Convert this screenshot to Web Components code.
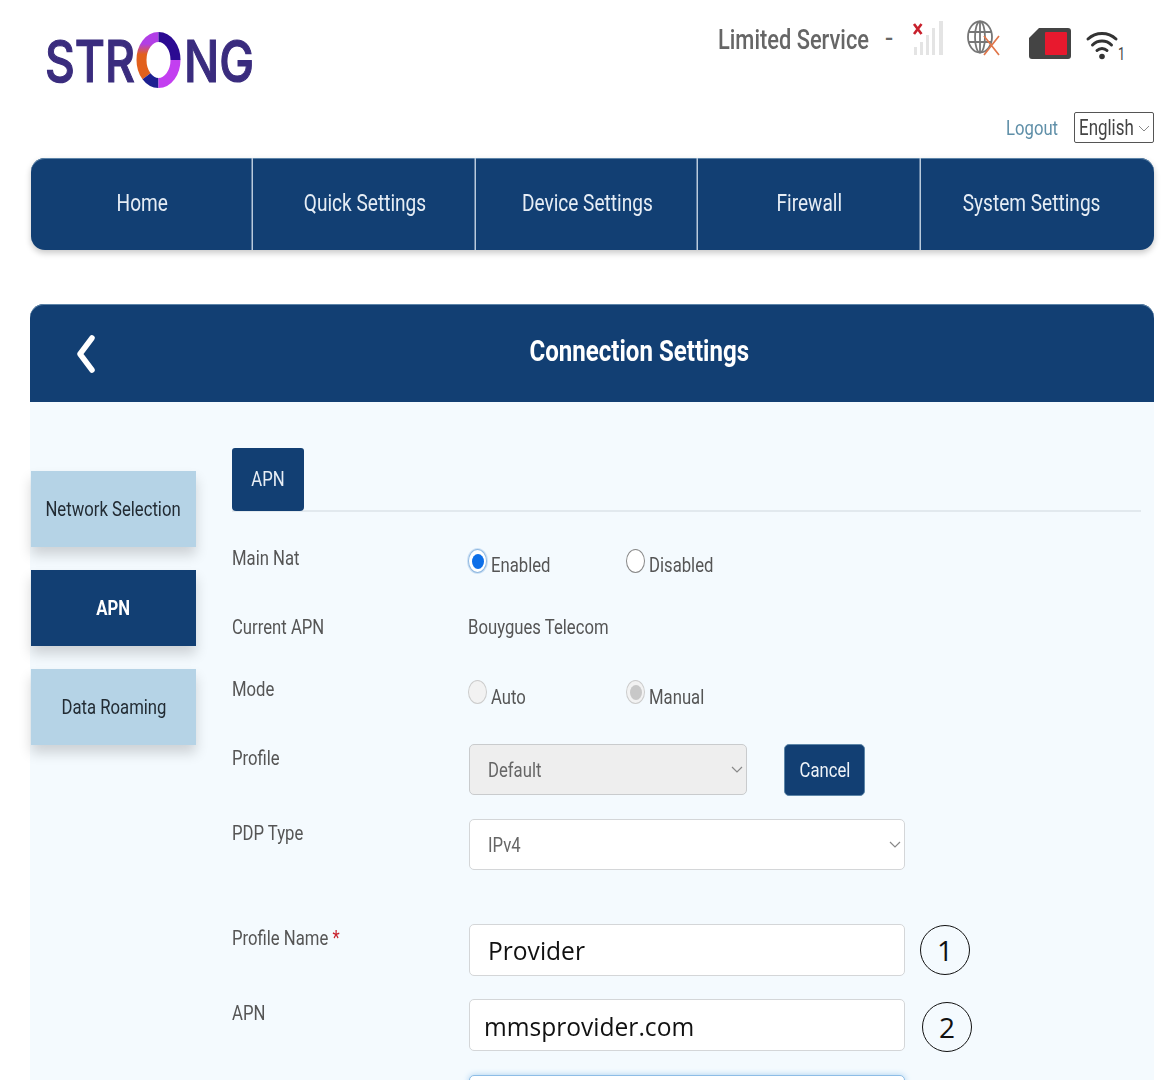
<!DOCTYPE html>
<html>
<head>
<meta charset="utf-8">
<title>Connection Settings</title>
<style>
  html, body { margin: 0; height: 1080px; overflow: hidden; background: #fff; }
  body { font-family: Roboto, "Liberation Sans", sans-serif; color: #444; }
</style>
</head>
<body>
<router-page>
  <router-header></router-header>
  <router-nav>
    <nav-item>Home</nav-item>
    <nav-item>Quick Settings</nav-item>
    <nav-item>Device Settings</nav-item>
    <nav-item>Firewall</nav-item>
    <nav-item>System Settings</nav-item>
  </router-nav>
  <settings-panel heading="Connection Settings">
    <side-tab slot="side">Network Selection</side-tab>
    <side-tab slot="side" active>APN</side-tab>
    <side-tab slot="side">Data Roaming</side-tab>

    <form-row label="Main Nat" h="70" lab="32" fld="36">
      <radio-opt state="on">Enabled</radio-opt>
      <radio-opt>Disabled</radio-opt>
    </form-row>
    <form-row label="Current APN" h="67" lab="31" fld="31"><narrow-text>Bouygues Telecom</narrow-text></form-row>
    <form-row label="Mode" h="80" lab="26" fld="30" style="--ty:4px">
      <radio-opt state="off-dis">Auto</radio-opt>
      <radio-opt state="on-dis">Manual</radio-opt>
    </form-row>
    <form-row label="Profile" h="75" lab="15" fld="14">
      <select-box disabled style="width:278px">Default</select-box>
      <cancel-btn>Cancel</cancel-btn>
    </form-row>
    <form-row label="PDP Type" h="105" lab="15" fld="14"><select-box style="width:436px">IPv4</select-box></form-row>
    <form-row label="Profile Name" req h="75" lab="15" fld="14">
      <text-box>Provider</text-box><step-mark>1</step-mark>
    </form-row>
    <form-row label="APN" h="76" lab="15" fld="14">
      <text-box pad="14" style="padding-top:2px">mmsprovider.com</text-box><step-mark nudge="2">2</step-mark>
    </form-row>
    <form-row h="60" fld="14"><text-box focus></text-box></form-row>
  </settings-panel>
</router-page>

<script>
// narrowed text: the screenshot is squeezed horizontally, so glyphs get a scaleX
class NarrowText extends HTMLElement {
  constructor() {
    super();
    this.attachShadow({ mode: 'open' }).innerHTML = `
      <style>
        :host { display: inline-block; white-space: nowrap; transform: scaleX(var(--sx, .795)); transform-origin: var(--ox, left) center; }
      </style><slot></slot>`;
  }
}

class RouterPage extends HTMLElement {
  constructor() {
    super();
    this.attachShadow({ mode: 'open' }).innerHTML = `
      <style>:host { display: block; width: 1173px; height: 1080px; overflow: hidden; }</style><slot></slot>`;
  }
}

class RouterHeader extends HTMLElement {
  constructor() {
    super();
    this.attachShadow({ mode: 'open' }).innerHTML = `
      <style>
        :host { display: block; height: 158px; box-sizing: border-box; padding: 0 19px 0 44px; }
        .wrap { display: flex; justify-content: space-between; height: 100%; }
        .logo { display: block; margin-top: 20px; filter: blur(.5px); }
        .right { display: flex; flex-direction: column; align-items: flex-end; }
        .status { display: flex; align-items: flex-start; height: 112px; margin-right: 26px; }
        .service { font-weight: 500; font-size: 28px; line-height: 33px; color: #666; margin-top: 23px; width: 170px; --sx: .78; }
        .dash { font-weight: 500; font-size: 24px; color: #666; margin: 24px 0 0 -3px; width: 27px; }
        .icons { display: block; margin-top: 18px; }
        .links { display: flex; align-items: center; gap: 16px; }
        .logout { color: #5f8fa8; font-size: 21px; width: 52px; }
        .lang { width: 80px; height: 31px; box-sizing: border-box; border: 1px solid #555; border-radius: 2px; background: #fff; display: flex; align-items: center; padding-left: 4px; font-size: 22px; color: #444; position: relative; --sx: .77; }
        .lang svg { position: absolute; right: 3px; top: 12px; }
      </style>
      <div class="wrap">
        <svg class="logo" width="250" height="76" viewBox="0 0 250 76">
          <defs>
            <linearGradient id="o1" x1="0" y1="0" x2="0" y2="1"><stop offset=".3" stop-color="#b23fe6"/><stop offset=".75" stop-color="#e2601c"/></linearGradient>
          </defs>
          <g font-family="Inter, 'Liberation Sans', sans-serif" font-weight="500" font-size="58" fill="#3a2c7e" stroke="#3a2c7e" stroke-width="1.200">
            <text x="1" y="62" textLength="90" lengthAdjust="spacingAndGlyphs">STR</text>
            <text x="140" y="62" textLength="70" lengthAdjust="spacingAndGlyphs">NG</text>
          </g>
          <g fill="none" stroke-width="10">
            <path d="M97.500 40A17 23 0 0 1 114.500 17" stroke="url(#o1)"/>
            <path d="M114.500 17A17 23 0 0 1 131.500 40" stroke="#2b0a92"/>
            <path d="M102.500 56.300A17 23 0 0 1 97.500 40" stroke="#e2601c"/>
            <path d="M114.500 63A17 23 0 0 1 102.500 56.300" stroke="#1d2090"/>
            <path d="M131.500 40A17 23 0 0 1 114.500 63" stroke="#c33ff0"/>
          </g>
        </svg>
        <div class="right">
          <div class="status">
            <narrow-text class="service" style="margin-left:1px">Limited Service</narrow-text>
            <span class="dash">-</span>
            <svg class="icons" width="216" height="46" viewBox="0 0 216 46">
              <!-- signal bars with red cross -->
              <g fill="#e4e4e4">
                <rect x="2" y="29" width="3" height="8"/><rect x="8" y="24" width="3" height="13"/>
                <rect x="14" y="17" width="3" height="20"/><rect x="20" y="10" width="3" height="27"/><rect x="27" y="3" width="4" height="34"/>
              </g>
              <path d="M2 6l7.500 10M9.500 6l-7.500 10" stroke="#c8202c" stroke-width="2.600"/>
              <!-- globe with orange cross -->
              <g fill="none" stroke="#777" stroke-width="1.800">
                <ellipse cx="68" cy="19" rx="12" ry="15.500"/><ellipse cx="68" cy="19" rx="5" ry="15.500"/>
                <path d="M68 3.500v31M56.500 14h23M56.500 24h23"/>
              </g>
              <path d="M72 18l15 19M87 18l-15 19" stroke="#e0764a" stroke-width="1.700" fill="none"/>
              <!-- sim card -->
              <path d="M127 10h29q3 0 3 3v25q0 3-3 3h-36q-3 0-3-3v-18z" fill="#444"/>
              <rect x="133" y="14" width="22" height="23" rx="1" fill="#e8192e"/>
              <!-- wifi -->
              <g fill="none" stroke="#333" stroke-width="3" stroke-linecap="round">
                <path d="M176 21a20.500 20.500 0 0 1 28 0"/><path d="M180.500 27a13.500 13.500 0 0 1 19 0"/><path d="M185 32.500a7 7 0 0 1 10 0"/>
              </g>
              <circle cx="190" cy="38.500" r="2.800" fill="#333"/>
              <text x="206" y="42" font-size="19" fill="#444" textLength="7" lengthAdjust="spacingAndGlyphs">1</text>
            </svg>
          </div>
          <div class="links">
            <narrow-text class="logout">Logout</narrow-text>
            <div class="lang"><narrow-text>English</narrow-text>
              <svg width="12" height="8" viewBox="0 0 12 8"><path d="M1 1l5 5 5-5" fill="none" stroke="#888" stroke-width="1"/></svg>
            </div>
          </div>
        </div>
      </div>`;
  }
}

class RouterNav extends HTMLElement {
  constructor() {
    super();
    this.attachShadow({ mode: 'open' }).innerHTML = `
      <style>
        :host { display: flex; margin: 0 19px 0 31px; padding-right: 11px; height: 92px; background: #123f73; border-radius: 14px; box-shadow: 0 3px 6px rgba(0,0,0,.22), inset 0 1px 0 #5d84a8; overflow: hidden; }
      </style><slot></slot>`;
  }
}

class NavItem extends HTMLElement {
  constructor() {
    super();
    this.attachShadow({ mode: 'open' }).innerHTML = `
      <style>
        :host { flex: 1 1 0; display: flex; align-items: center; justify-content: center; color: #e6edf5; font-size: 24px; box-shadow: -1.500px 0 0 #b9cadc; padding-bottom: 2px; }
        :host(:first-child) { box-shadow: none; }
      </style><narrow-text style="--ox:center"><slot></slot></narrow-text>`;
  }
}

class SettingsPanel extends HTMLElement {
  constructor() {
    super();
    const title = this.getAttribute('heading');
    this.attachShadow({ mode: 'open' }).innerHTML = `
      <style>
        :host { display: block; margin: 54px 19px 0 30px; }
        .head { height: 98px; background: #123f73; border-radius: 14px 14px 0 0; box-shadow: inset 0 1px 0 #5d84a8; display: flex; align-items: center; justify-content: center; position: relative; color: #fff; font-size: 29px; font-weight: 700; padding: 0 0 4px 94px; box-sizing: border-box; }
        .back { position: absolute; left: 45px; top: 31px; }
        .body { background: #f4fafe; height: 678px; display: flex; }
        .side { width: 165px; margin: 0 1px 0 1px; padding-top: 69px; display: flex; flex-direction: column; gap: 23px; flex: none; }
        .main { margin-left: 35px; width: 909px; padding-top: 46px; }
        .tabs { border-bottom: 2px solid #e2e9ee; height: 62px; margin-bottom: 1px; }
        .tab { width: 72px; height: 63px; box-sizing: border-box; background: #123f73; color: #e8eef5; border-radius: 3px 3px 4px 4px; font-size: 21px; display: flex; align-items: center; justify-content: center; padding-bottom: 2px; }
      </style>
      <div class="head">
        <svg class="back" width="22" height="38" viewBox="0 0 22 38"><path d="M17 3L5 19l12 16" fill="none" stroke="#fff" stroke-width="5.500" stroke-linecap="round" stroke-linejoin="round"/></svg>
        <narrow-text style="--ox:center;--sx:.83">${title}</narrow-text>
      </div>
      <div class="body">
        <div class="side"><slot name="side"></slot></div>
        <div class="main">
          <div class="tabs"><div class="tab"><narrow-text style="--ox:center">APN</narrow-text></div></div>
          <div><slot></slot></div>
        </div>
      </div>`;
  }
}

class SideTab extends HTMLElement {
  constructor() {
    super();
    this.attachShadow({ mode: 'open' }).innerHTML = `
      <style>
        :host { display: flex; height: 76px; align-items: center; justify-content: center; background: #b5d3e6; color: #222b33; font-size: 21px; box-shadow: 0 8px 12px rgba(0,0,0,.16); }
        :host([active]) { background: #123f73; color: #fff; font-weight: 700; }
      </style><narrow-text style="--ox:center"><slot></slot></narrow-text>`;
  }
}

class FormRow extends HTMLElement {
  constructor() {
    super();
    const label = this.getAttribute('label') || '';
    const req = this.hasAttribute('req') ? ' <span style="color:#c8202c">*</span>' : '';
    this.attachShadow({ mode: 'open' }).innerHTML = `
      <style>
        :host { display: flex; height: ${this.getAttribute('h')}px; font-size: 21px; line-height: 26px; color: #555; }
        .label { width: 236px; flex: none; padding-top: ${this.getAttribute('lab') || 0}px; }
        .field { flex: 1; display: flex; align-items: flex-start; padding-top: ${this.getAttribute('fld') || 0}px; }
      </style>
      <div class="label"><narrow-text>${label}${req}</narrow-text></div>
      <div class="field"><slot></slot></div>`;
  }
}

class RadioOpt extends HTMLElement {
  constructor() {
    super();
    const st = this.getAttribute('state') || 'off';
    const look = {
      on: 'background:#fff;border:1.500px solid #8fb8e0;box-shadow:0 0 0 1px #cfe2f5',
      off: 'background:#fff;border:1.500px solid #888',
      'off-dis': 'background:#f2f2f2;border:1.500px solid #ccc',
      'on-dis': 'background:#f2f2f2;border:1.500px solid #ccc'
    }[st];
    const dot = st === 'on' ? '#0d6fe8' : st === 'on-dis' ? '#c8c8c8' : 'transparent';
    this.attachShadow({ mode: 'open' }).innerHTML = `
      <style>
        :host { display: flex; width: 158px; flex: none; align-items: flex-start; }
        .r { width: 19px; height: 24px; border-radius: 50%; box-sizing: border-box; flex: none; display: flex; align-items: center; justify-content: center; ${look} }
        .d { width: 12px; height: 15px; border-radius: 50%; background: ${dot}; }
        narrow-text { margin: var(--ty, 3px) 0 0 4px; }
      </style>
      <span class="r"><span class="d"></span></span><narrow-text><slot></slot></narrow-text>`;
  }
}

class SelectBox extends HTMLElement {
  constructor() {
    super();
    this.attachShadow({ mode: 'open' }).innerHTML = `
      <style>
        :host { display: flex; height: 51px; margin-left: 1px; box-sizing: border-box; align-items: center; background: #fff; border: 1.500px solid #d4d6d8; border-radius: 5px; padding-left: 18px; position: relative; color: #666; flex: none; }
        :host([disabled]) { background: #eee; border-color: #c9cbcd; }
        svg { position: absolute; right: 3px; top: 21px; }
      </style>
      <narrow-text><slot></slot></narrow-text>
      <svg width="12" height="8" viewBox="0 0 12 8"><path d="M1 1l5 5 5-5" fill="none" stroke="#888" stroke-width="1.200"/></svg>`;
  }
}

class CancelBtn extends HTMLElement {
  constructor() {
    super();
    this.attachShadow({ mode: 'open' }).innerHTML = `
      <style>
        :host { display: flex; width: 81px; height: 52px; margin-left: 37px; align-items: center; justify-content: center; background: #123f73; color: #eef3f8; border-radius: 5px; border: 1px solid #5d86a8; box-sizing: border-box; flex: none; }
      </style><narrow-text style="--ox:center"><slot></slot></narrow-text>`;
  }
}

class TextBox extends HTMLElement {
  constructor() {
    super();
    const pad = this.getAttribute('pad') || 18;
    this.attachShadow({ mode: 'open' }).innerHTML = `
      <style>
        :host { display: flex; width: 436px; height: 52px; margin-left: 1px; flex: none; box-sizing: border-box; align-items: center; background: #fff; border: 1.500px solid #d4d6d8; border-radius: 5px; padding-left: ${pad}px; font: 26px "Open Sans", sans-serif; color: #111; --sx: .945; }
        :host([focus]) { border-color: #8dbde6; box-shadow: 0 0 6px #a8d0f0; }
      </style><narrow-text><slot></slot></narrow-text>`;
  }
}

class StepMark extends HTMLElement {
  constructor() {
    super();
    const n = Number(this.getAttribute('nudge') || 0);
    this.attachShadow({ mode: 'open' }).innerHTML = `
      <style>
        :host { display: flex; width: 50px; height: 50px; margin: ${1 + n}px 0 0 ${15 + n}px; box-sizing: border-box; align-items: center; justify-content: center; border: 1.500px solid #111; border-radius: 50%; font: 28px "Open Sans", sans-serif; color: #111; flex: none; }
      </style><slot></slot>`;
  }
}

customElements.define('narrow-text', NarrowText);
customElements.define('router-page', RouterPage);
customElements.define('router-header', RouterHeader);
customElements.define('router-nav', RouterNav);
customElements.define('nav-item', NavItem);
customElements.define('settings-panel', SettingsPanel);
customElements.define('side-tab', SideTab);
customElements.define('form-row', FormRow);
customElements.define('radio-opt', RadioOpt);
customElements.define('select-box', SelectBox);
customElements.define('cancel-btn', CancelBtn);
customElements.define('text-box', TextBox);
customElements.define('step-mark', StepMark);
</script>
</body>
</html>
